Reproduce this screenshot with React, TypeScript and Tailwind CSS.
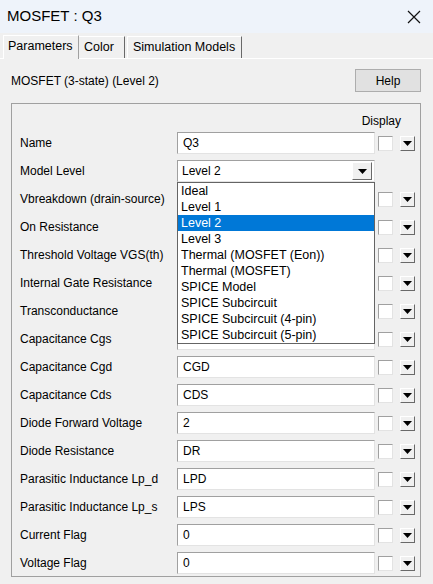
import React from 'react';

const rows: { label: string; value: string }[] = [
  { label: 'Name', value: 'Q3' },
  { label: 'Model Level', value: 'Level 2' },
  { label: 'Vbreakdown (drain-source)', value: '' },
  { label: 'On Resistance', value: '' },
  { label: 'Threshold Voltage VGS(th)', value: '' },
  { label: 'Internal Gate Resistance', value: '' },
  { label: 'Transconductance', value: '' },
  { label: 'Capacitance Cgs', value: '' },
  { label: 'Capacitance Cgd', value: 'CGD' },
  { label: 'Capacitance Cds', value: 'CDS' },
  { label: 'Diode Forward Voltage', value: '2' },
  { label: 'Diode Resistance', value: 'DR' },
  { label: 'Parasitic Inductance Lp_d', value: 'LPD' },
  { label: 'Parasitic Inductance Lp_s', value: 'LPS' },
  { label: 'Current Flag', value: '0' },
  { label: 'Voltage Flag', value: '0' },
];

const levels = [
  'Ideal',
  'Level 1',
  'Level 2',
  'Level 3',
  'Thermal (MOSFET (Eon))',
  'Thermal (MOSFET)',
  'SPICE Model',
  'SPICE Subcircuit',
  'SPICE Subcircuit (4-pin)',
  'SPICE Subcircuit (5-pin)',
];

const Arrow = () => (
  <svg width="9" height="5" viewBox="0 0 9 5">
    <path d="M0 0 H9 L4.5 5 Z" fill="#000" />
  </svg>
);

const DropButton = () => (
  <div className="w-[15px] h-[15px] bg-[#f0f0f0] border-t border-l border-t-white border-l-white border-r border-b border-r-[#696969] border-b-[#696969] flex items-center justify-center">
    <Arrow />
  </div>
);

const CheckBox = () => (
  <div className="w-[15px] h-[15px] bg-white border-t border-l border-t-[#a0a0a0] border-l-[#a0a0a0] border-r border-b border-r-[#e3e3e3] border-b-[#e3e3e3]" />
);

export default function App() {
  return (
    <div
      className="w-[433px] h-[584px] bg-[#f0f0f0] text-black overflow-hidden relative"
      style={{ fontFamily: '"Liberation Sans", Arial, sans-serif' }}
    >
      {/* title bar */}
      <div className="h-[33px] bg-[#eef3fa] flex items-center justify-between pl-[7px] pr-[12px]">
        <span className="text-[15px]">MOSFET : Q3</span>
        <svg width="14" height="14" viewBox="0 0 14 14">
          <path d="M1 1 L13 13 M13 1 L1 13" stroke="#111" strokeWidth="1.2" />
        </svg>
      </div>

      {/* tabs */}
      <div className="relative h-[25px] mt-[1px] pl-[3px] flex items-end text-[12.5px]">
        <div className="absolute left-0 right-0 bottom-0 h-[1px] bg-white" />
        <div className="relative z-10 h-[24px] w-[76px] bg-[#f0f0f0] border-t border-l border-t-white border-l-white border-r border-r-[#a0a0a0] flex items-center pl-[4px] pb-[2px]">
          Parameters
        </div>
        <div className="h-[22px] w-[46px] border-t border-t-white border-r border-r-[#696969] flex items-center pl-[5px] mb-[1px]">
          Color
        </div>
        <div className="h-[22px] w-[115px] ml-[2px] border-t border-l border-t-white border-l-white border-r border-r-[#696969] flex items-center pl-[5px] mb-[1px]">
          Simulation Models
        </div>
      </div>

      {/* header line */}
      <div className="flex items-center justify-between pl-[11px] pr-[12px] mt-[10px] text-[12px]">
        <span>MOSFET (3-state) (Level 2)</span>
        <div className="w-[66px] h-[23px] bg-[#e1e1e1] border border-[#adadad] flex items-center justify-center">
          Help
        </div>
      </div>

      {/* group box */}
      <div className="relative ml-[11px] mr-[12px] mt-[11px] h-[474px] border border-[#a0a0a0] text-[12px]">
        <div className="h-[28px] flex items-end justify-end pr-[19px] pb-[2px]">Display</div>
        <div className="flex flex-col gap-[6px]">
          {rows.map((r, i) => (
            <div key={r.label} className="flex items-center h-[22px]">
              <div className="w-[165px] pl-[8px] whitespace-nowrap">{r.label}</div>
              {i === 1 ? (
                <div className="w-[198px] h-[22px] bg-white border-t border-l border-t-[#a0a0a0] border-l-[#a0a0a0] border-r border-b border-r-[#e3e3e3] border-b-[#e3e3e3] flex items-center justify-between pl-[4px] pr-[2px]">
                  <span>{r.value}</span>
                  <div className="w-[20px] h-[18px] bg-[#f0f0f0] border-t border-l border-t-white border-l-white border-r border-b border-r-[#696969] border-b-[#696969] flex items-center justify-center">
                    <Arrow />
                  </div>
                </div>
              ) : (
                <div className="w-[198px] h-[22px] bg-white border-t border-l border-t-[#a0a0a0] border-l-[#a0a0a0] border-r border-b border-r-[#e3e3e3] border-b-[#e3e3e3] flex items-center pl-[5px]">
                  {r.value}
                </div>
              )}
              {i === 1 ? null : (
                <div className="flex items-center ml-[3px] gap-[7px]">
                  <CheckBox />
                  <DropButton />
                </div>
              )}
            </div>
          ))}
        </div>

        {/* open dropdown list */}
        <div className="absolute left-[165px] top-[78px] w-[198px] h-[162px] bg-white border border-[#646464]">
          {levels.map((l) => (
            <div
              key={l}
              className={
                l === 'Level 2'
                  ? 'h-[16px] leading-[16px] pl-[3px] bg-[#0078d7] text-white text-[12.5px]'
                  : 'h-[16px] leading-[16px] pl-[3px] text-[12.5px]'
              }
            >
              {l}
            </div>
          ))}
        </div>
      </div>
    </div>
  );
}
